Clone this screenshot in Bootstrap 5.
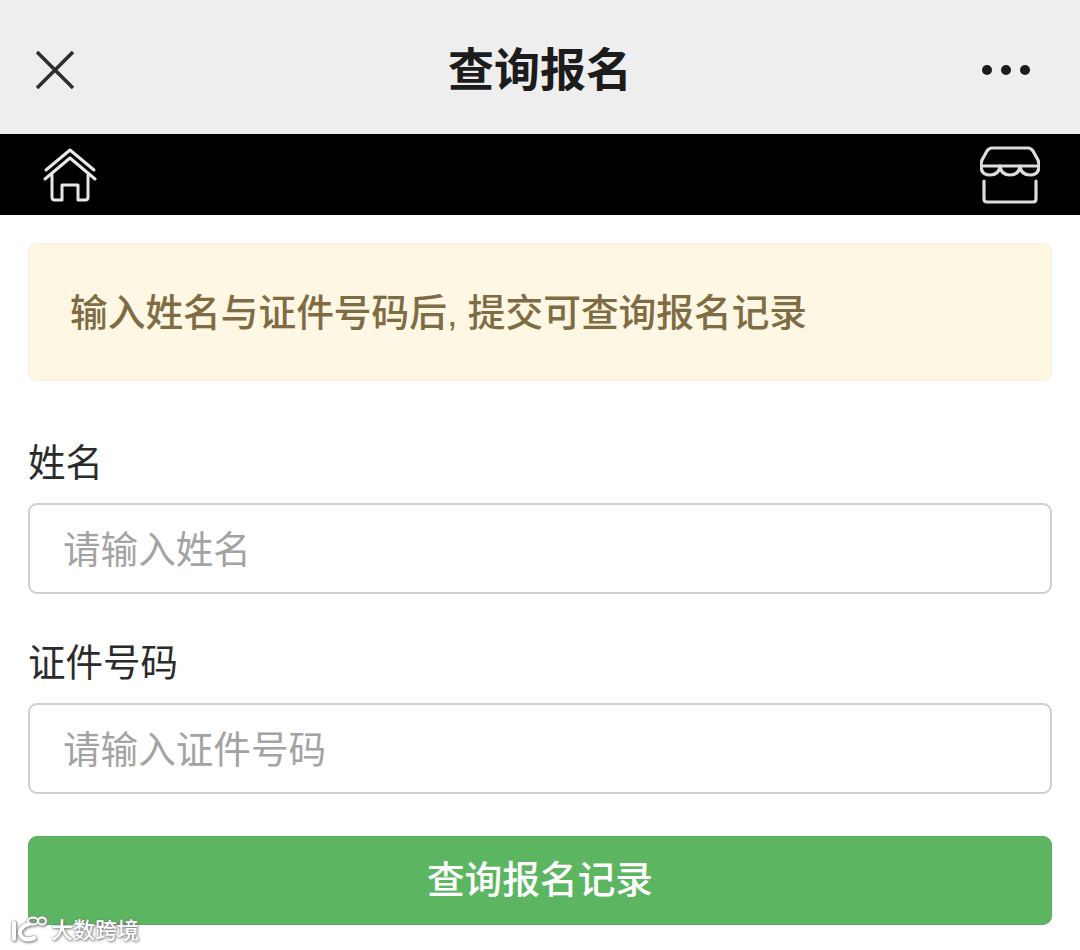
<!DOCTYPE html>
<html lang="zh-CN">
<head>
  <meta charset="UTF-8">
  <meta name="viewport" content="width=device-width, initial-scale=1.0">
  <title>查询报名</title>
  <link href="https://cdn.jsdelivr.net/npm/bootstrap@5.3.0/dist/css/bootstrap.min.css" rel="stylesheet">
  <style>
    html, body {
      height: 950px;
      overflow: hidden;
    }
    body {
      background-color: #fff;
      color: #2b2b2b;
      font-family: "Liberation Sans", "Noto Sans CJK SC", sans-serif;
    }
    .top-bar {
      height: 134px;
      background-color: #eeeeee;
      padding: 6px 49px 0 36px;
    }
    .top-side {
      width: 50px;
    }
    .top-side-left {
      width: 63px;
    }
    .top-title {
      font-size: 46px;
      font-weight: 700;
      color: #1c1c1c;
      line-height: 1;
    }
    .shop-bar {
      height: 81px;
      background-color: #000;
      padding: 0 40px 0 43px;
    }
    .page-body {
      padding: 28px 28px 0 28px;
    }
    .notice {
      height: 138px;
      margin-bottom: 61px;
      padding: 3px 41px 0;
      font-size: 37.7px;
      line-height: 1;
      font-weight: 500;
      color: #7f6c42;
      background-color: #fdf7e4;
      border: 1px solid #f6f0dd;
      border-radius: 9px;
    }
    .field-label {
      font-size: 37.5px;
      line-height: 42px;
      color: #2b2b2b;
      margin-bottom: 19px;
    }
    .field-input {
      height: 91px;
      padding: 3px 33px 0;
      font-size: 37.6px;
      border: 2px solid #cfcfcf;
      border-radius: 9px;
      margin-bottom: 48px;
    }
    .field-input::placeholder {
      color: #a3a3a3;
      opacity: 1;
    }
    .submit-btn {
      height: 89px;
      margin-top: -6px;
      font-size: 37.7px;
      line-height: 1;
      font-weight: 500;
      color: #fff;
      background-color: #5cb561;
      border: 1px solid #58ad5d;
      border-radius: 9px;
    }
    .watermark {
      position: absolute;
      left: 9px;
      top: 915px;
      color: #fff;
      font-size: 22px;
      line-height: 1;
      font-weight: 500;
      text-shadow: 0 0 2px #777, 1px 1px 3px #777;
    }
    .watermark-text {
      margin-top: 3px;
    }
    .watermark-logo {
      filter: drop-shadow(0 0 1px #777) drop-shadow(1px 1px 1px #999);
    }
  </style>
</head>
<body class="position-relative">
<div class="top-bar d-flex align-items-center justify-content-between">
  <div class="top-side-left">
    <svg class="d-block" width="38" height="38" viewBox="0 0 38 38" fill="none" stroke="#2e2e2e" stroke-width="3.6"><path d="M1 1 37 37M37 1 1 37"/></svg>
  </div>
  <div class="top-title">查询报名</div>
  <div class="top-side">
    <svg class="d-block" width="50" height="14" viewBox="0 0 50 14" fill="#1c1c1c"><circle cx="6" cy="7" r="5"/><circle cx="25" cy="7" r="5"/><circle cx="44" cy="7" r="5"/></svg>
  </div>
</div>
<div class="shop-bar d-flex align-items-center justify-content-between">
  <svg width="56" height="54" viewBox="0 0 56 54" fill="none" stroke="#e8e8e8" stroke-width="3" stroke-linejoin="round" stroke-linecap="round">
    <path d="M3 22 27 2 51 22"/>
    <path d="M2 31 27 10 52 31"/>
    <path d="M9 27V49Q9 52 12 52H19V37H35V52H42Q45 52 45 49V27"/>
  </svg>
  <svg width="60" height="58" viewBox="0 0 60 58" fill="none" stroke="#dcdcdc" stroke-width="3.2" stroke-linejoin="round" stroke-linecap="round">
    <path d="M12 2H48Q51 2 53 5L58 14Q59 17 59 20H1Q1 17 2 14L7 5Q9 2 12 2Z"/>
    <path d="M1 20Q1 29 10 29Q19 29 20 20Q21 29 30 29Q39 29 40 20Q41 29 50 29Q59 29 59 20"/>
    <path d="M4 35V53Q4 56 7 56H53Q56 56 56 53V35"/>
  </svg>
</div>
<div class="page-body">
  <div class="notice d-flex align-items-center">输入姓名与证件号码后, 提交可查询报名记录</div>
  <form>
    <label class="field-label d-block" for="name">姓名</label>
    <input class="form-control field-input" id="name" type="text" placeholder="请输入姓名">
    <label class="field-label d-block" for="idno">证件号码</label>
    <input class="form-control field-input" id="idno" type="text" placeholder="请输入证件号码">
    <button class="btn submit-btn w-100 d-flex align-items-center justify-content-center" type="button">查询报名记录</button>
  </form>
</div>
<div class="watermark d-flex align-items-center gap-1">
  <svg class="watermark-logo" width="38" height="28" viewBox="0 0 38 28" fill="none" stroke="#fff" stroke-width="4" stroke-linecap="round">
    <path d="M5 8V24"/>
    <path d="M20 9Q10 12 11 19Q14 27 25 23"/>
    <ellipse cx="24" cy="6" rx="5" ry="3.5" stroke-width="2"/>
    <ellipse cx="33" cy="6" rx="4" ry="3.5" stroke-width="2"/>
  </svg>
  <span class="watermark-text">大数跨境</span>
</div>
<script src="https://cdn.jsdelivr.net/npm/bootstrap@5.3.0/dist/js/bootstrap.bundle.min.js"></script>
</body>
</html>
